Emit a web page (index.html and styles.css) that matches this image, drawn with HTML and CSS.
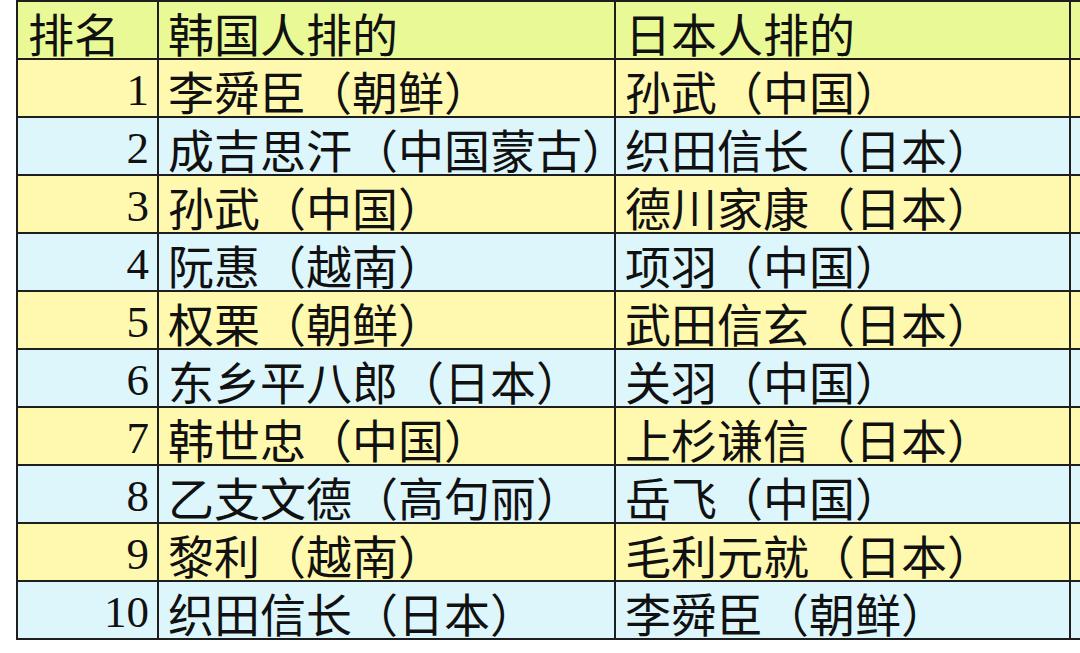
FILE: index.html
```html
<!DOCTYPE html>
<html lang="zh">
<head>
<meta charset="utf-8">
<link rel="stylesheet" href="styles.css">
</head>
<body>
<table class="rank">
  <colgroup>
    <col class="c-rank">
    <col class="c-kr">
    <col class="c-jp">
    <col class="c-extra">
  </colgroup>
  <tr class="head"><td class="h1">排名</td><td>韩国人排的</td><td>日本人排的</td><td></td></tr>
  <tr class="y"><td class="num">1</td><td>李舜臣（朝鲜）</td><td>孙武（中国）</td><td></td></tr>
  <tr class="b"><td class="num">2</td><td>成吉思汗（中国蒙古）</td><td>织田信长（日本）</td><td></td></tr>
  <tr class="y"><td class="num">3</td><td>孙武（中国）</td><td>德川家康（日本）</td><td></td></tr>
  <tr class="b"><td class="num">4</td><td>阮惠（越南）</td><td>项羽（中国）</td><td></td></tr>
  <tr class="y"><td class="num">5</td><td>权栗（朝鲜）</td><td>武田信玄（日本）</td><td></td></tr>
  <tr class="b"><td class="num">6</td><td>东乡平八郎（日本）</td><td>关羽（中国）</td><td></td></tr>
  <tr class="y"><td class="num">7</td><td>韩世忠（中国）</td><td>上杉谦信（日本）</td><td></td></tr>
  <tr class="b"><td class="num">8</td><td>乙支文德（高句丽）</td><td>岳飞（中国）</td><td></td></tr>
  <tr class="y"><td class="num">9</td><td>黎利（越南）</td><td>毛利元就（日本）</td><td></td></tr>
  <tr class="b"><td class="num">10</td><td>织田信长（日本）</td><td>李舜臣（朝鲜）</td><td></td></tr>
</table>
</body>
</html>
```
FILE: styles.css
```css
html, body {
  margin: 0;
  padding: 0;
  background: #ffffff;
  overflow: hidden;
  width: 1080px;
  height: 653px;
}

.rank {
  margin-left: 16px;
  margin-top: 0;
  border-collapse: collapse;
  table-layout: fixed;
  width: 1200px;
  font-family: "Noto Sans CJK SC", "Noto Sans", sans-serif;
  font-size: 46px;
  color: #111111;
}

.c-rank { width: 141px; }
.c-kr { width: 457px; }
.c-jp { width: 455px; }
.c-extra { width: 147px; }

.rank td {
  border: 2px solid #1e1e1e;
  height: 52px;
  padding: 4px 0 0 9px;
  line-height: 52px;
  white-space: nowrap;
  overflow: visible;
  vertical-align: middle;
}

.rank .head td {
  background: #e8f995;
}

.rank .head td.h1 {
  padding-left: 10px;
}

.rank .y td {
  background: #fff9b0;
}

.rank .b td {
  background: #ddf6fb;
}

.rank td.num {
  text-align: right;
  padding: 4px 8px 0 0;
  font-family: "Liberation Serif", "Times New Roman", serif;
  font-size: 45px;
}
```
